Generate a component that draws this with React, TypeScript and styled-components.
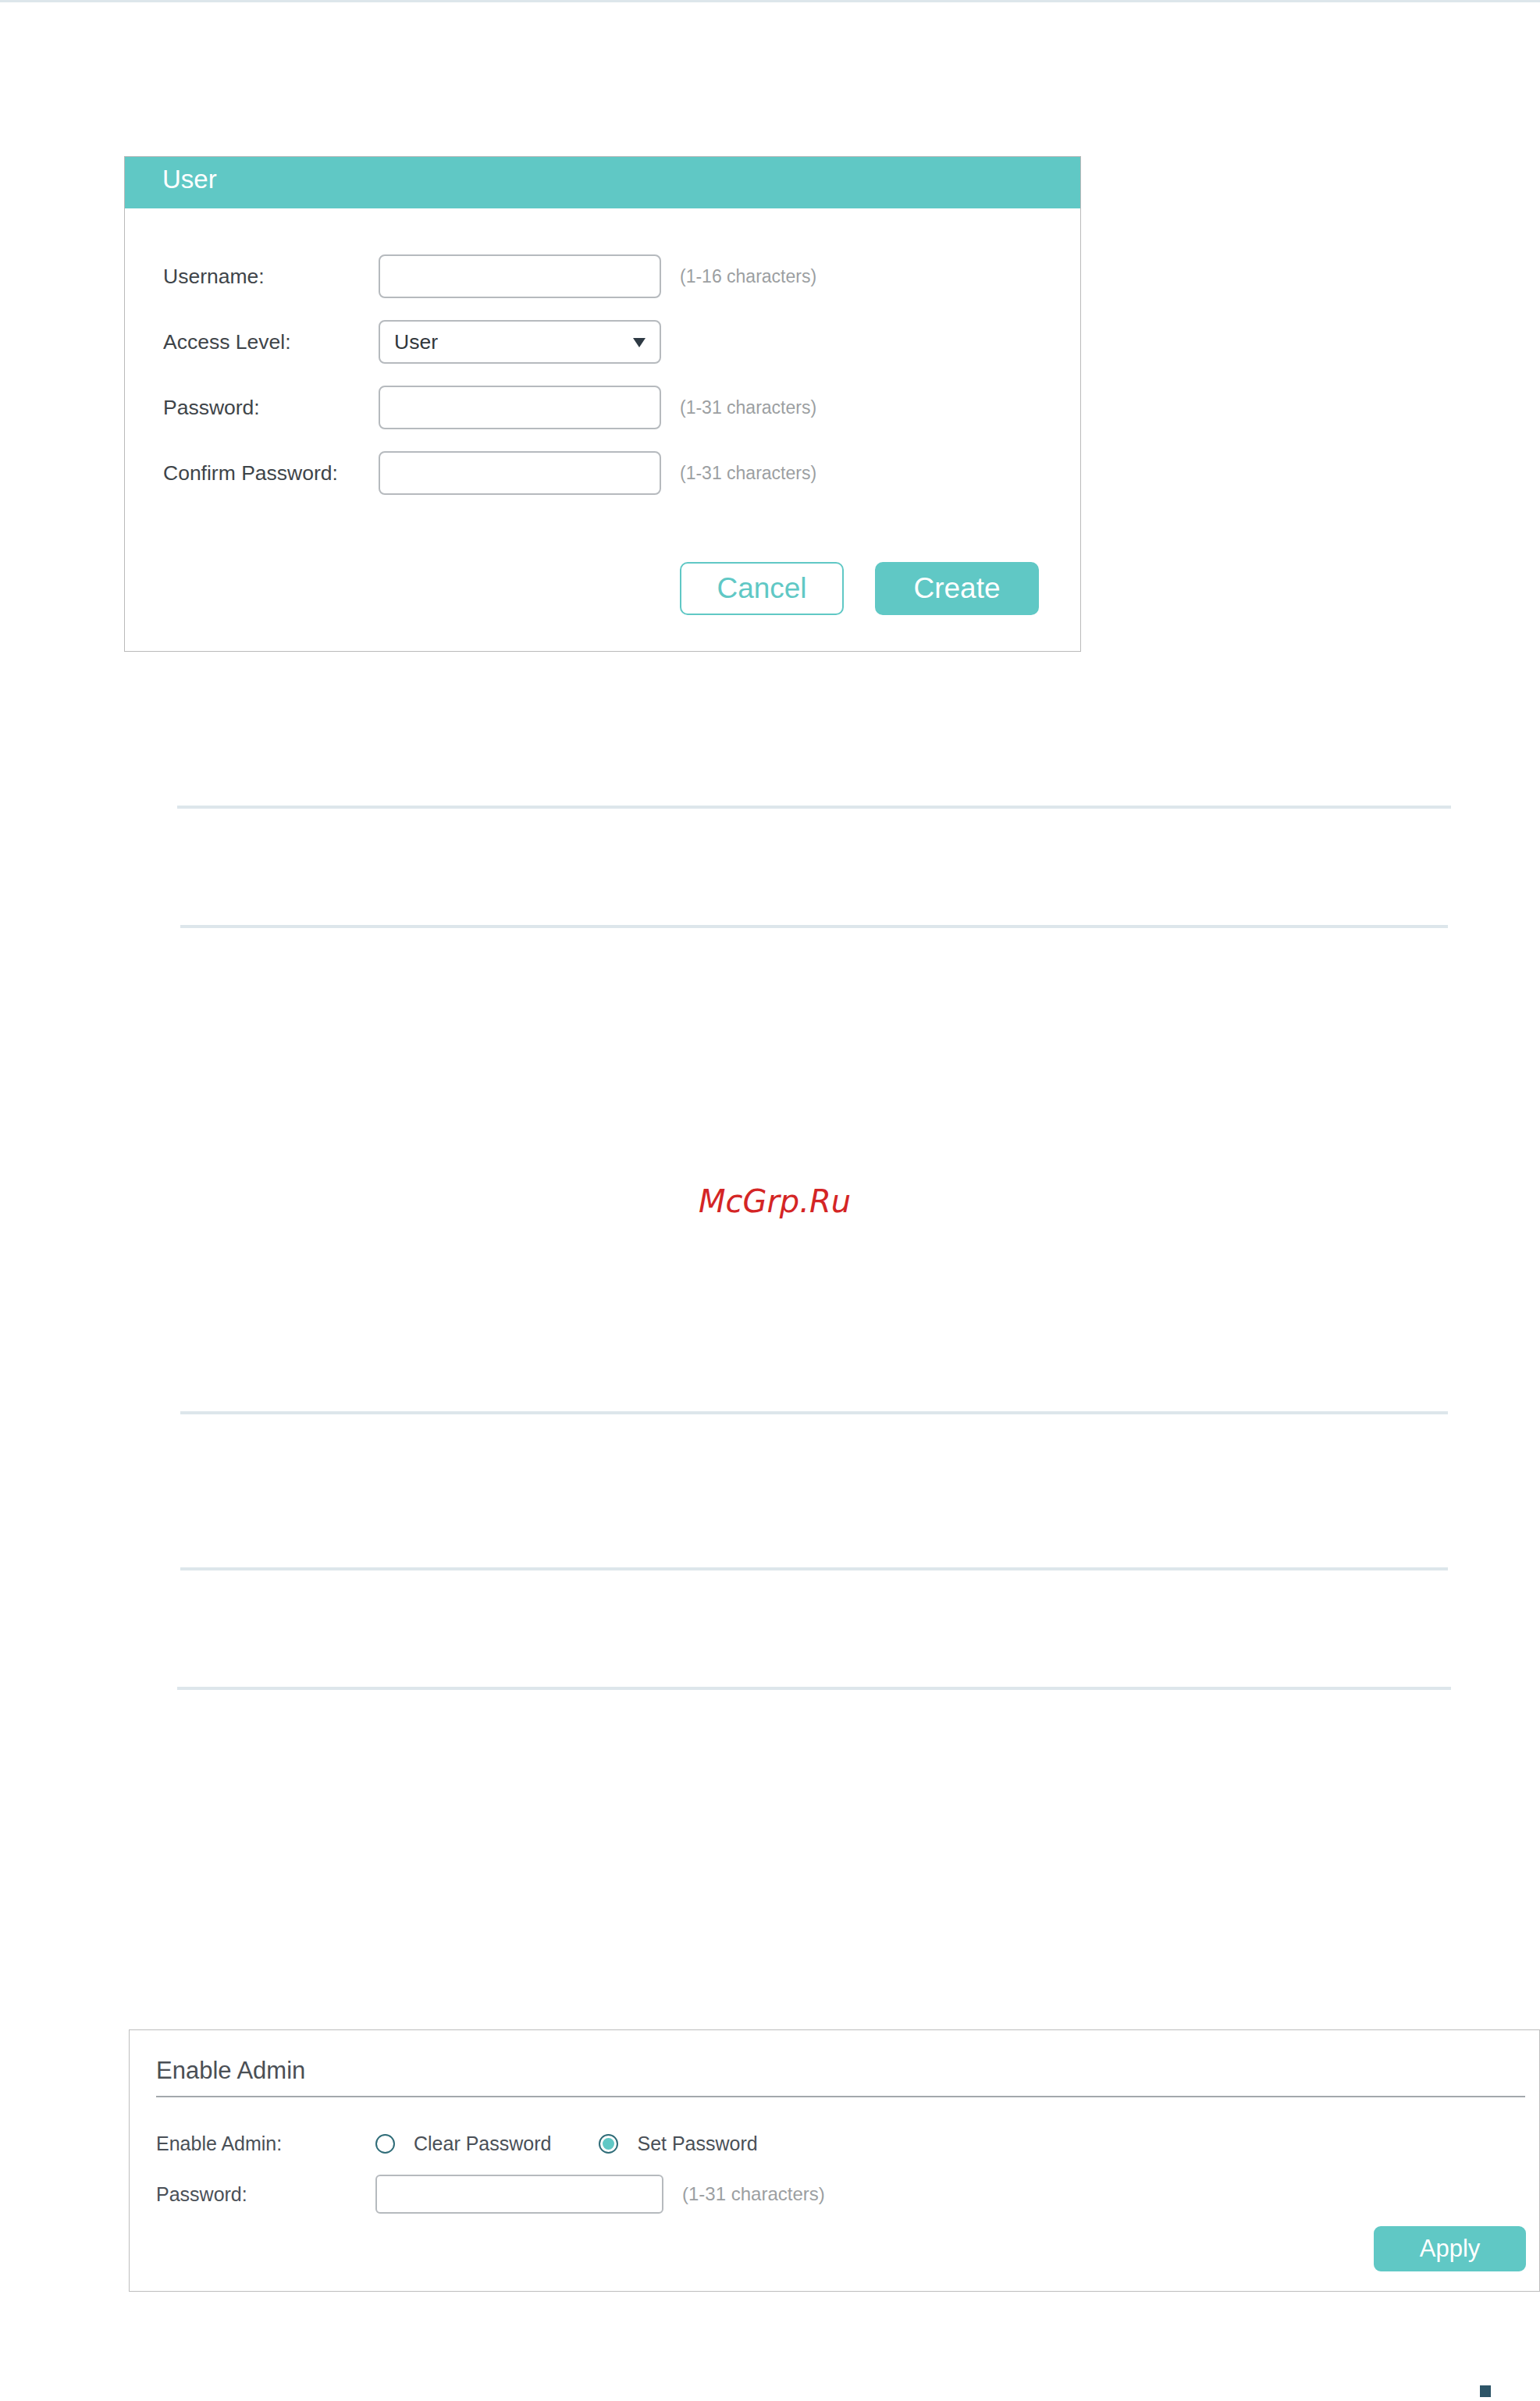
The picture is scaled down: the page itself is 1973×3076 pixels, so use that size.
import styled, { createGlobalStyle } from 'styled-components'

const GlobalStyle = createGlobalStyle`
  *, *::before, *::after {
    box-sizing: border-box;
  }
  body {
    margin: 0;
    background: #ffffff;
    font-family: 'Liberation Sans', Arial, sans-serif;
  }
`

const teal = '#60c8c5'
const ruleColor = '#dde6eb'

const Page = styled.div`
  width: 1973px;
  min-height: 3076px;
  display: flex;
  flex-direction: column;
  align-items: flex-start;
`

const TopRule = styled.div`
  width: 100%;
  height: 3px;
  background: ${ruleColor};
`

const Rule = styled.div<{ $top: number; $wide?: boolean }>`
  margin-top: ${({ $top }) => $top}px;
  margin-left: ${({ $wide }) => ($wide ? 227 : 231)}px;
  width: ${({ $wide }) => ($wide ? 1632 : 1624)}px;
  height: 4px;
  background: ${ruleColor};
`

/* ---------- user dialog ---------- */

const Dialog = styled.section`
  margin: 197px 0 0 159px;
  width: 1226px;
  border: 1px solid #bababa;
  display: flex;
  flex-direction: column;
`

const DialogHeader = styled.header`
  height: 66px;
  background: ${teal};
  padding: 10px 0 0 48px;
  color: #ffffff;
  font-size: 33px;
  line-height: 38px;
`

const DialogForm = styled.div`
  padding: 59px 53px 46px 49px;
  display: flex;
  flex-direction: column;
`

const Fields = styled.div`
  display: flex;
  flex-direction: column;
  gap: 28px;
`

const FieldRow = styled.div`
  display: flex;
  align-items: center;
  height: 56px;
`

const FieldLabel = styled.span`
  width: 276px;
  font-size: 26.5px;
  color: #3e4449;
`

const TextBox = styled.div`
  width: 362px;
  height: 56px;
  border: 2px solid #b6babe;
  border-radius: 8px;
  background: #ffffff;
`

const SelectBox = styled(TextBox)`
  display: flex;
  align-items: center;
  justify-content: space-between;
  padding: 0 18px 0 18px;
  font-size: 26.5px;
  color: #30363b;
`

const Caret = styled.span`
  width: 0;
  height: 0;
  border-left: 8px solid transparent;
  border-right: 8px solid transparent;
  border-top: 12px solid #2e3a44;
  margin-top: 2px;
`

const Hint = styled.span<{ $size?: number }>`
  margin-left: 24px;
  font-size: ${({ $size }) => $size ?? 23}px;
  color: #9c9fa2;
`

const Actions = styled.div`
  margin-top: 86px;
  display: flex;
  justify-content: flex-end;
  gap: 40px;
`

const Button = styled.button<{ $primary?: boolean }>`
  width: 210px;
  height: 68px;
  border-radius: 10px;
  border: 2px solid ${teal};
  background: ${({ $primary }) => ($primary ? teal : '#ffffff')};
  color: ${({ $primary }) => ($primary ? '#ffffff' : teal)};
  font-family: 'Liberation Sans', Arial, sans-serif;
  font-size: 37px;
  padding: 0;
  cursor: pointer;
`

/* ---------- watermark ---------- */

const Watermark = styled.div`
  margin-top: 327px;
  width: 100%;
  padding-left: 12px;
  text-align: center;
  font-family: 'DejaVu Sans', sans-serif;
  font-style: italic;
  font-size: 40px;
  line-height: 46px;
  color: #d42525;
`

/* ---------- enable admin panel ---------- */

const Panel = styled.section`
  margin: 435px 0 0 165px;
  width: 1808px;
  border: 1px solid #bdbdbd;
  padding: 34px 17px 25px 34px;
  display: flex;
  flex-direction: column;
`

const PanelTitle = styled.h2`
  margin: 0 1px 0 0;
  font-weight: normal;
  font-size: 31px;
  line-height: 36px;
  color: #4a4f55;
  padding-bottom: 14px;
  border-bottom: 2px solid #a3a8ac;
`

const PanelRow = styled.div<{ $gap: number }>`
  margin-top: ${({ $gap }) => $gap}px;
  display: flex;
  align-items: center;
  height: 50px;
`

const PanelLabel = styled.span`
  width: 281px;
  font-size: 25px;
  color: #4a5057;
`

const RadioGroup = styled.label`
  display: flex;
  align-items: center;
  gap: 24px;
  margin-right: 61px;
  font-size: 25px;
  color: #4a5057;
`

const RadioDot = styled.span<{ $checked?: boolean }>`
  width: 25px;
  height: 25px;
  border-radius: 50%;
  border: 2px solid #2f6c78;
  display: flex;
  align-items: center;
  justify-content: center;

  &::after {
    content: '';
    width: 15px;
    height: 15px;
    border-radius: 50%;
    background: ${({ $checked }) => ($checked ? teal : 'transparent')};
  }
`

const PanelInput = styled(TextBox)`
  width: 369px;
  height: 50px;
  border-radius: 6px;
`

const ApplyRow = styled.div`
  margin-top: 16px;
  display: flex;
  justify-content: flex-end;
`

const ApplyButton = styled(Button)`
  width: 195px;
  height: 58px;
  border-radius: 9px;
  font-size: 31px;
`

const Footer = styled.div`
  margin-top: 120px;
  width: 100%;
  display: flex;
  justify-content: flex-end;
  padding-right: 63px;
`

const PageMark = styled.span`
  width: 14px;
  height: 15px;
  background: #2d5567;
`

const fields = [
  { label: 'Username:', hint: '(1-16 characters)' },
  { label: 'Access Level:', select: 'User' },
  { label: 'Password:', hint: '(1-31 characters)' },
  { label: 'Confirm Password:', hint: '(1-31 characters)' },
]

export default function App() {
  return (
    <Page>
      <GlobalStyle />
      <TopRule />

      <Dialog>
        <DialogHeader>User</DialogHeader>
        <DialogForm>
          <Fields>
            {fields.map((f) => (
              <FieldRow key={f.label}>
                <FieldLabel>{f.label}</FieldLabel>
                {f.select ? (
                  <SelectBox>
                    {f.select}
                    <Caret />
                  </SelectBox>
                ) : (
                  <TextBox />
                )}
                {f.hint && <Hint>{f.hint}</Hint>}
              </FieldRow>
            ))}
          </Fields>
          <Actions>
            <Button>Cancel</Button>
            <Button $primary>Create</Button>
          </Actions>
        </DialogForm>
      </Dialog>

      <Rule $top={197} $wide />
      <Rule $top={149} />

      <Watermark>McGrp.Ru</Watermark>

      <Rule $top={246} />
      <Rule $top={196} />
      <Rule $top={149} $wide />

      <Panel>
        <PanelTitle>Enable Admin</PanelTitle>
        <PanelRow $gap={34}>
          <PanelLabel>Enable Admin:</PanelLabel>
          <RadioGroup>
            <RadioDot />
            Clear Password
          </RadioGroup>
          <RadioGroup>
            <RadioDot $checked />
            Set Password
          </RadioGroup>
        </PanelRow>
        <PanelRow $gap={15}>
          <PanelLabel>Password:</PanelLabel>
          <PanelInput />
          <Hint $size={24}>(1-31 characters)</Hint>
        </PanelRow>
        <ApplyRow>
          <ApplyButton $primary>Apply</ApplyButton>
        </ApplyRow>
      </Panel>

      <Footer>
        <PageMark />
      </Footer>
    </Page>
  )
}
